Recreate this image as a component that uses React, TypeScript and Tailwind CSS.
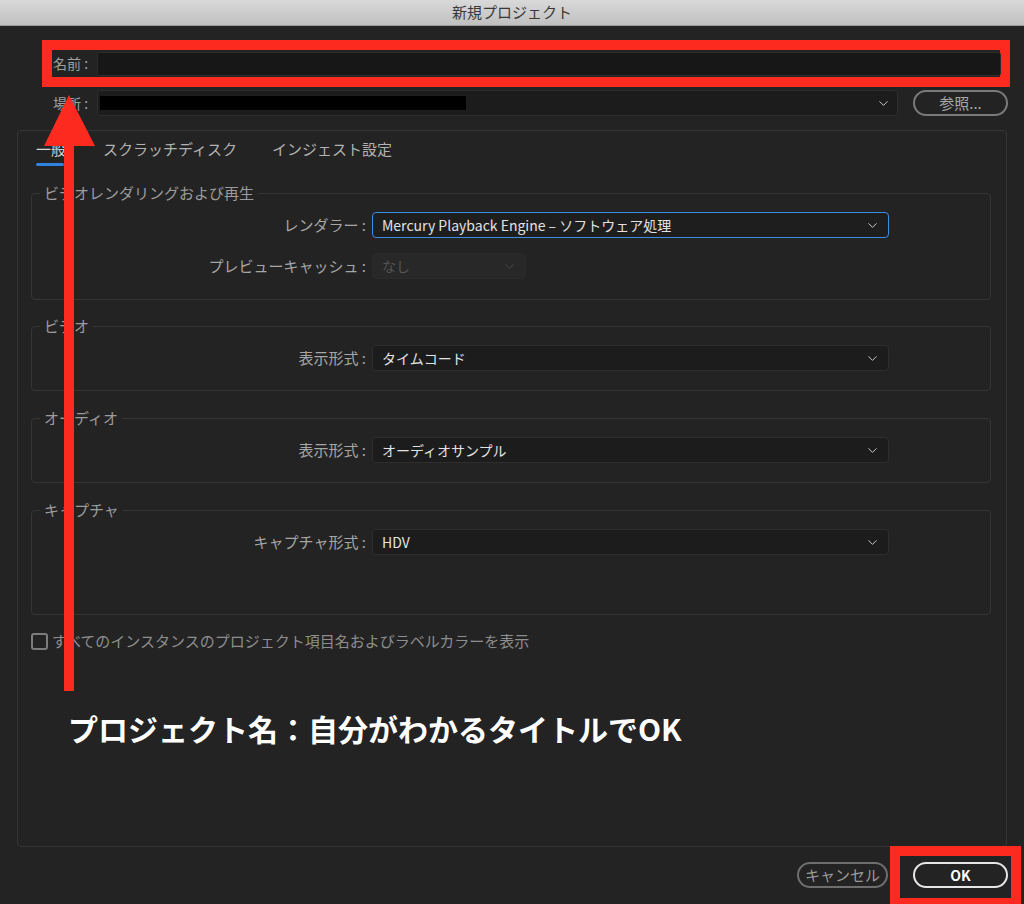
import { ChevronDown } from "lucide-react";

const FONT = { fontFamily: '"Noto Sans CJK JP", "Noto Sans", sans-serif' };

function Select({
  value,
  width,
  focused,
  disabled,
}: {
  value: string;
  width: string;
  focused?: boolean;
  disabled?: boolean;
}) {
  return (
    <div
      className={`${width} h-[26px] flex items-center justify-between pl-[9px] pr-[8px] rounded-[4px] text-[14px] ${
        focused
          ? "border-[1.5px] border-[#3a8de6] bg-[#1e1e1e]"
          : disabled
          ? "border border-[#2a2a2a] bg-[#282828]"
          : "border border-[#2e2e2e] bg-[#1c1c1c]"
      } ${disabled ? "text-[#555555]" : "text-[#e2e2e2]"}`}
    >
      <span>{value}</span>
      <ChevronDown className={`w-[15px] h-[15px] ${disabled ? "text-[#4a4a4a]" : "text-[#c8c8c8]"}`} strokeWidth={1.6} />
    </div>
  );
}

function Row({ label, children }: { label: string; children: React.ReactNode }) {
  return (
    <div className="flex items-center">
      <div className="w-[340px] text-right text-[15px] text-[#a6a6a6] pr-[6px]">{label} :</div>
      {children}
    </div>
  );
}

function Group({
  title,
  className,
  children,
}: {
  title: string;
  className: string;
  children: React.ReactNode;
}) {
  return (
    <fieldset className={`border border-[#363636] rounded-[4px] w-[960px] ml-[13px] ${className}`}>
      <legend className="ml-[8px] px-[4px] text-[15px] leading-[16px] text-[#9c9c9c]">{title}</legend>
      {children}
    </fieldset>
  );
}

export default function App() {
  return (
    <div className="relative w-[1024px] h-[904px] bg-[#232323] overflow-hidden" style={FONT}>
      {/* title bar */}
      <div className="h-[26px] flex items-center justify-center bg-gradient-to-b from-[#d9d9d9] to-[#c0c0c0] border-b border-[#9a9a9a] text-[15px] text-[#383838]">
        新規プロジェクト
      </div>

      {/* name row, highlighted */}
      <div className="mt-[14px] ml-[42px] w-[968px] h-[47px] border-[10px] border-[#fd2b1f] flex items-center">
        <span className="w-[45px] pl-[1px] text-[14px] text-[#a0a0a0]">名前 :</span>
        <div className="flex-1 h-[24px] mr-[-1px] bg-[#171717] border border-[#2c2c2c] rounded-[3px]" />
      </div>

      {/* location row */}
      <div className="mt-[3px] flex items-center h-[26px]">
        <span className="w-[97px] pl-[53px] text-[14px] text-[#a0a0a0]">場所 :</span>
        <div className="w-[801px] h-[26px] bg-[#1c1c1c] border border-[#2e2e2e] rounded-[4px] flex items-center justify-between pl-[2px] pr-[6px]">
          <div className="w-[366px] h-[14px] bg-black" />
          <ChevronDown className="w-[15px] h-[15px] text-[#c8c8c8]" strokeWidth={1.6} />
        </div>
        <button className="ml-[15px] w-[95px] h-[26px] rounded-full border-2 border-[#7a7a7a] text-[15px] text-[#a8a8a8]">
          参照...
        </button>
      </div>

      {/* main panel */}
      <div className="mt-[14px] ml-[17px] w-[990px] h-[717px] border border-[#363636] rounded-[4px]">
        <div className="flex items-end h-[35px] pl-[18px] text-[15px]">
          <div className="flex flex-col">
            <span className="text-[#d6d6d6] leading-[18px]">一般</span>
            <div className="mt-[5px] h-[3px] w-[28px] bg-[#2f83e0] rounded-full" />
          </div>
          <span className="ml-[37px] mb-[8px] text-[#b2b2b2] leading-[18px]">スクラッチディスク</span>
          <span className="ml-[35px] mb-[8px] text-[#b2b2b2] leading-[18px]">インジェスト設定</span>
        </div>

        <Group title="ビデオレンダリングおよび再生" className="mt-[19px] h-[115px]">
          <div className="pt-[11px] flex flex-col gap-[15px]">
            <Row label="レンダラー">
              <Select value="Mercury Playback Engine – ソフトウェア処理" width="w-[517px]" focused />
            </Row>
            <Row label="プレビューキャッシュ">
              <Select value="なし" width="w-[154px]" disabled />
            </Row>
          </div>
        </Group>

        <Group title="ビデオ" className="mt-[18px] h-[73px]">
          <div className="pt-[11px]">
            <Row label="表示形式">
              <Select value="タイムコード" width="w-[517px]" />
            </Row>
          </div>
        </Group>

        <Group title="オーディオ" className="mt-[19px] h-[73px]">
          <div className="pt-[11px]">
            <Row label="表示形式">
              <Select value="オーディオサンプル" width="w-[517px]" />
            </Row>
          </div>
        </Group>

        <Group title="キャプチャ" className="mt-[19px] h-[113px]">
          <div className="pt-[11px]">
            <Row label="キャプチャ形式">
              <Select value="HDV" width="w-[517px]" />
            </Row>
          </div>
        </Group>

        <div className="mt-[15px] ml-[13px] flex items-center gap-[4px]">
          <div className="w-[17px] h-[17px] border-2 border-[#7c7c7c] rounded-[3px]" />
          <span className="text-[15px] text-[#8e8e8e]">すべてのインスタンスのプロジェクト項目名およびラベルカラーを表示</span>
        </div>
      </div>

      {/* footer buttons */}
      <div className="mt-[15px] flex justify-end gap-[25px] pr-[16px]">
        <button className="w-[91px] h-[26px] rounded-full border-2 border-[#6e6e6e] text-[15px] text-[#9a9a9a]">
          キャンセル
        </button>
        <button className="w-[95px] h-[26px] rounded-full border-2 border-[#e6e6e6] text-[14px] font-semibold text-white">
          OK
        </button>
      </div>

      {/* annotations */}
      <svg className="absolute left-0 top-0 pointer-events-none" width="120" height="700">
        <polygon points="69,95 44,146 95,146" fill="#fd2b1f" />
        <rect x="64" y="140" width="10" height="551" fill="#fd2b1f" />
      </svg>
      <div className="absolute left-[68px] top-[708px] text-[30px] font-bold text-white leading-[40px]">
        プロジェクト名：自分がわかるタイトルでOK
      </div>
      <div className="absolute left-[890px] top-[846px] w-[131px] h-[62px] border-[10px] border-[#fd2b1f]" />
    </div>
  );
}
